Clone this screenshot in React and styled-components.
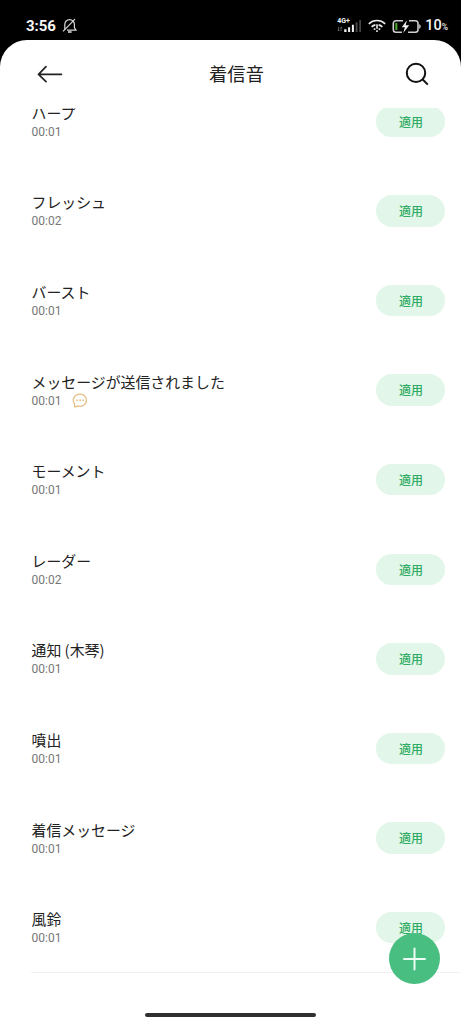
import React from "react";
import styled, { createGlobalStyle } from "styled-components";

const ringtones = [
   { title: "ハープ", time: "00:01" },
   { title: "フレッシュ", time: "00:02" },
   { title: "バースト", time: "00:01" },
   { title: "メッセージが送信されました", time: "00:01", message: true },
   { title: "モーメント", time: "00:01" },
   { title: "レーダー", time: "00:02" },
   { title: "通知 (木琴)", time: "00:01" },
   { title: "噴出", time: "00:01" },
   { title: "着信メッセージ", time: "00:01" },
   { title: "風鈴", time: "00:01" },
]

const BellOffIcon = () => (
   <svg width="16" height="16" viewBox="0 0 16 16" fill="none" stroke="#d8d8d8" strokeWidth="1.2">
      <path d="M2.8 11.6V6.4a4.8 4.8 0 0 1 9.6 0v3.2l1.6 2.6H5" />
      <path d="M6 14h3.6" strokeWidth="1.6" />
      <path d="M1 13.4L13 1.2" />
   </svg>
)

const SignalIcon = () => (
   <svg width="25" height="16" viewBox="0 0 25 16">
      <path d="M1.7 9v4M.6 11.8l1.1 1.3M4 13V9M4 9l1.1 1.2" stroke="#777" strokeWidth=".8" fill="none" />
      <path d="M7.2 11.3h2.3V14H7.2zM11.1 9.3h2v4.7h-2zM14.9 6.8h2V14h-2z" fill="#f2f2f2" />
      <path d="M18.7 4.3h1.8V14h-1.8zM22.3 2h1.6v12h-1.6z" fill="#4c4c4c" />
   </svg>
)

const WifiIcon = () => (
   <svg width="18" height="14" viewBox="0 0 18 14" fill="none" stroke="#ececec" strokeWidth="1.6">
      <path d="M.8 4.8a12 12 0 0 1 16.4 0" />
      <path d="M3.6 7.9a8 8 0 0 1 3.8-2M14.4 7.9a8 8 0 0 0-3.8-2" />
      <path d="M5.8 10.5l1.6-.9M12.2 10.5l-1.6-.9M9 5.2v4.6M9 11.2v1.9" />
   </svg>
)

const BatteryIcon = () => (
   <svg width="30" height="15" viewBox="0 0 30 15">
      <path d="M11 1.7H4a2.7 2.7 0 0 0-2.7 2.7v6.2A2.7 2.7 0 0 0 4 13.3h6M16 13.3h7.3a2.7 2.7 0 0 0 2.7-2.7V4.4a2.7 2.7 0 0 0-2.7-2.7H17" fill="none" stroke="#cfcfcf" strokeWidth="1.6" />
      <path d="M27.2 5.3c2 .3 2 4.1 0 4.4z" fill="#cfcfcf" />
      <rect x="3.3" y="4" width="2.1" height="7" rx=".5" fill="#49a52c" />
      <path d="M14.9 1.2L9.8 8.2h3.1L11.2 14l6-7.7h-3.5z" fill="#eee" />
   </svg>
)

const BackIcon = () => (
   <svg width="26" height="18" viewBox="0 0 26 18" fill="none" stroke="#222" strokeWidth="1.7" strokeLinecap="round" strokeLinejoin="round">
      <path d="M9 1.7L1.5 9.3L9 16.6M1.5 9.3H24.5" />
   </svg>
)

const SearchIcon = () => (
   <svg width="24" height="24" viewBox="0 0 24 24" fill="none" stroke="#111" strokeWidth="2">
      <circle cx="11" cy="10.9" r="9.2" />
      <path d="M17.5 17.3l5.3 5.3" />
   </svg>
)

const MessageIcon = () => (
   <svg width="16" height="16" viewBox="0 0 16 16">
      <path d="M2.6 13.8v-3A6.6 6.1 0 1 1 5.6 12.9Q4.4 13.7 2.6 13.8z" fill="none" stroke="#e6bd7f" strokeWidth="1.2" strokeLinejoin="round" />
      <g fill="#e6bd7f">
         <circle cx="5" cy="7.2" r=".85" />
         <circle cx="8.1" cy="7.2" r=".85" />
         <circle cx="11.2" cy="7.2" r=".85" />
      </g>
   </svg>
)

const RingtoneItem = ({ title, time, message }) => {
   return (
      <Item>
         <Info>
            <Title>{title}</Title>
            <Details>
               <Time>{time}</Time>
               {message && <MessageIcon />}
            </Details>
         </Info>
         <ApplyButton>適用</ApplyButton>
      </Item>
   )
}

const App = () => {
   return (
      <Screen>
         <GlobalStyle />
         <StatusBar>
            <Clock>3:56</Clock>
            <BellOffIcon />
            <StatusRight>
               <Signal>
                  <Network>4G+</Network>
                  <SignalIcon />
               </Signal>
               <WifiIcon />
               <Battery>
                  <BatteryIcon />
                  <Percent>10<small>%</small></Percent>
               </Battery>
            </StatusRight>
         </StatusBar>
         <Sheet>
            <Header>
               <IconButton aria-label="戻る"><BackIcon /></IconButton>
               <Heading>着信音</Heading>
               <IconButton aria-label="検索"><SearchIcon /></IconButton>
            </Header>
            <Viewport>
               <List>
                  {ringtones.map((el) => <RingtoneItem key={el.title} {...el} />)}
               </List>
            </Viewport>
         </Sheet>
         <AddButton aria-label="追加">
            <svg width="24" height="24" viewBox="0 0 24 24" stroke="#ebfff4" strokeWidth="2" strokeLinecap="round">
               <path d="M11.5 1.5v21M1 12h21" />
            </svg>
         </AddButton>
         <HomeIndicator />
      </Screen>
   )
}
export default App

const GlobalStyle = createGlobalStyle`
   * {
      box-sizing: border-box;
   }
   body {
      margin: 0;
      background: #000;
      font-family: Roboto, "Noto Sans CJK JP", sans-serif;
   }
   svg {
      display: block;
      flex-shrink: 0;
   }
   button {
      border: none;
      padding: 0;
      font-family: inherit;
   }
`
const Screen = styled.div`
   position: relative;
   width: 461px;
   height: 1024px;
   overflow: hidden;
   background: #000;
`
const StatusBar = styled.div`
   height: 40px;
   display: flex;
   align-items: center;
   padding: 12px 13px 0 26px;
   color: #f5f5f5;
`
const Clock = styled.span`
   width: 36px;
   font-size: 15px;
   line-height: 20px;
   font-weight: 700;
   letter-spacing: -0.05px;
`
const StatusRight = styled.div`
   margin-left: auto;
   display: flex;
   align-items: center;
`
const Signal = styled.div`
   position: relative;
   margin-right: 6px;
`
const Network = styled.span`
   position: absolute;
   left: 0;
   top: -1px;
   font-size: 7px;
   line-height: 8px;
   font-weight: 700;
`
const Battery = styled.div`
   display: flex;
   align-items: center;
   margin-left: 6px;
`
const Percent = styled.span`
   font-size: 14.5px;
   line-height: 20px;
   font-weight: 500;
   margin-left: 3px;
   padding-top: 1px;
   small {
      font-size: 8.5px;
   }
`
const Sheet = styled.main`
   height: 984px;
   background: #fff;
   border-radius: 27px 27px 0 0;
`
const Header = styled.header`
   height: 68px;
   display: flex;
   align-items: center;
   justify-content: space-between;
   padding: 0 32px 0 37px;
`
const Heading = styled.h1`
   margin: 0;
   padding: 2px 0 0 5px;
   font-size: 18.3px;
   line-height: 26px;
   font-weight: 400;
   color: #222;
`
const IconButton = styled.button`
   background: none;
`
const Viewport = styled.div`
   height: 916px;
   overflow: hidden;
`
const List = styled.ul`
   list-style: none;
   margin: -31.5px 0 0 31px;
   padding: 0;
   border-bottom: 1px solid #f1f1f1;
`
const Item = styled.li`
   height: 89.6px;
   display: flex;
   align-items: center;
   justify-content: space-between;
   padding-right: 15.8px;
`
const Info = styled.div`
   padding-left: 0.5px;
`
const Title = styled.p`
   margin: -1px 0 1px;
   font-family: "Noto Sans CJK JP", sans-serif;
   font-size: 14.9px;
   line-height: 21px;
   color: #222;
   white-space: nowrap;
`
const Details = styled.div`
   height: 16px;
   display: flex;
   align-items: center;
   gap: 10.5px;
`
const Time = styled.span`
   font-size: 12px;
   line-height: 16px;
   color: #777;
   letter-spacing: 0.05px;
`
const ApplyButton = styled.button`
   width: 69px;
   height: 31.5px;
   padding: 0 0 0.5px 0.5px;
   border-radius: 16px;
   background: #e2f6e9;
   color: #2fab63;
   font-size: 12px;
   font-weight: 500;
`
const AddButton = styled.button`
   position: absolute;
   left: 389px;
   top: 933px;
   width: 51px;
   height: 51px;
   border-radius: 50%;
   background: #48be80;
   display: flex;
   align-items: center;
   justify-content: center;
`
const HomeIndicator = styled.div`
   position: absolute;
   left: 145px;
   top: 1012.5px;
   width: 171px;
   height: 4.5px;
   border-radius: 3px;
   background: #303030;
`
